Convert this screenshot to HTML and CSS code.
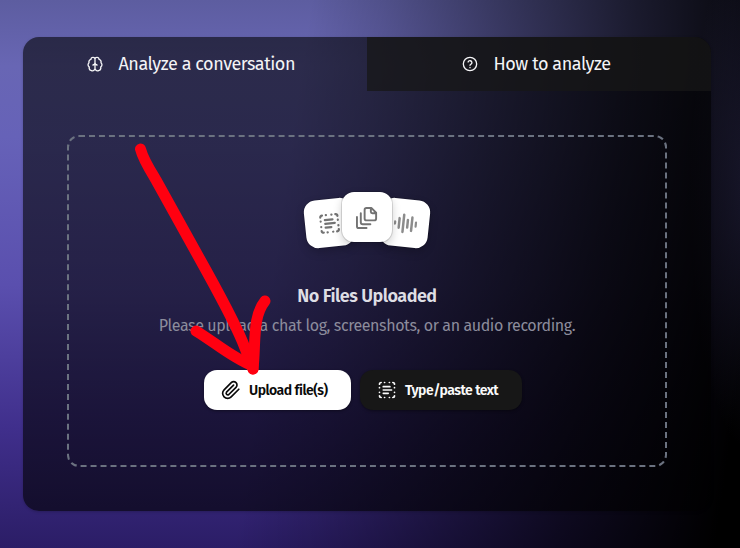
FILE: index.html
```html
<!DOCTYPE html>
<html lang="en">
<head>
<meta charset="utf-8">
<title>Analyze a conversation</title>
<link rel="stylesheet" href="styles.css">
</head>
<body>
<svg class="sprite" aria-hidden="true">
  <symbol id="select" viewBox="0 0 24 24">
    <path d="M5 3a2 2 0 0 0-2 2M19 3a2 2 0 0 1 2 2M5 21a2 2 0 0 1-2-2M21 19a2 2 0 0 1-2 2M9 3h.2M14.8 3h.2M9 21h.2M14.8 21h.2M3 9v.2M3 14.8v.2M21 9v.2M21 14.8v.2M7.5 8h8M7.5 12h10M7.5 16h6"/>
  </symbol>
</svg>
<main class="card">
  <nav class="tabs">
    <a class="tab">
      <svg class="tab-icon" viewBox="0 0 24 24"><path d="M12 5a3 3 0 0 0-6 0 4 4 0 0 0-3 5 4 4 0 0 0 .5 6.5A4 4 0 0 0 12 19zM12 5a3 3 0 0 1 6 0 4 4 0 0 1 3 5 4 4 0 0 1-.5 6.5A4 4 0 0 1 12 19zM9 13.5a4 4 0 0 0 3-4 4 4 0 0 0 3 4"/></svg>
      <span class="label-analyze">Analyze a conversation</span>
    </a>
    <a class="tab tab-muted">
      <svg class="tab-icon" viewBox="0 0 24 24"><circle cx="12" cy="12" r="10"/><path d="M9.1 9a3 3 0 0 1 5.8 1c0 2-2.9 2.4-2.9 4M12 17.3v.2"/></svg>
      <span class="label-how">How to analyze</span>
    </a>
  </nav>
  <section class="dropzone">
    <div class="tiles">
      <div class="tile tile-left"><svg viewBox="0 0 24 24"><use href="#select"/></svg></div>
      <div class="tile tile-main"><svg viewBox="0 0 24 24"><path d="M16 2h-5a2 2 0 0 0-2 2v9a2 2 0 0 0 2 2h8a2 2 0 0 0 2-2V7zM15.5 2v4a1.5 1.5 0 0 0 1.5 1.5h4M5 7.5V17a2 2 0 0 0 2 2h8M1 11.500V21a2 2 0 0 0 2 2h8"/></svg></div>
      <div class="tile tile-right"><svg viewBox="0 0 24 24"><path d="M1 11v2M5.400 7v10M9.800 3v18M14.200 8v8M18.600 5v14M23 10v4"/></svg></div>
    </div>
    <h2>No Files Uploaded</h2>
    <p>Please upload a chat log, screenshots, or an audio recording.</p>
    <div class="actions">
      <button class="btn btn-light"><svg viewBox="0 0 24 24"><path d="m21.400 11.100-9.200 9.200a6 6 0 0 1-8.500-8.500l8.600-8.600a4 4 0 1 1 5.700 5.700l-8.600 8.500a2 2 0 0 1-2.800-2.800l8.500-8.500"/></svg><span>Upload file(s)</span></button>
      <button class="btn btn-dark"><svg viewBox="0 0 24 24"><use href="#select"/></svg><span>Type/paste text</span></button>
    </div>
  </section>
</main>
<svg class="arrow" viewBox="0 0 740 548" aria-hidden="true">
  <path d="M140.500 149C143 159 150 170 156 180L207 272C223 301 238 329 245 348Q249 359 253 369"/>
  <path d="M196 331C213 341 232 358 253 366"/>
  <path d="M265 301C252 317 256 343 253 369"/>
</svg>
</body>
</html>
```
FILE: styles.css
```css
* { box-sizing: border-box; }

body {
  margin: 0;
  width: 740px;
  height: 548px;
  padding: 37px 29px 37px 23px;
  overflow: hidden;
  font-family: "Fira Sans", "Noto Sans", sans-serif;
  color: #f4f4f6;
  background:
    radial-gradient(ellipse 60px 260px at 750px 190px, rgba(70, 66, 125, .3), transparent),
    linear-gradient(98deg, transparent 38%, rgba(0, 0, 0, .14) 47%, rgba(0, 0, 0, .45) 63%, rgba(0, 0, 0, .72) 78%, #000 97%),
    linear-gradient(#5d5da0 0%, #6866b4 12%, #6662b8 25%, #5a4fae 52%, #402f8c 78%, #2b1d66 100%);
}

svg { fill: none; stroke: currentColor; stroke-width: 2; stroke-linecap: round; stroke-linejoin: round; flex: none; }
.sprite { position: absolute; width: 0; height: 0; }

.card {
  height: 474px;
  border-radius: 16px;
  overflow: hidden;
  background: linear-gradient(rgba(0, 0, 0, .58), rgba(0, 0, 0, .6));
  box-shadow: 0 1px 3px rgba(0, 0, 0, .2);
}

.tabs { display: grid; grid-template-columns: 1fr 1fr; height: 54px; }
.tab { display: flex; align-items: center; justify-content: center; gap: 16px; font-size: 18px; }
.tab-muted { background: rgba(23, 23, 23, .75); }
.tab-icon { width: 16px; height: 16px; }
.tab span { white-space: nowrap; }
.label-analyze { width: 185px; letter-spacing: -.45px; }
.label-how { width: 123px; letter-spacing: -.45px; }

.dropzone {
  margin: 44px;
  height: 332px;
  border: 2px dashed #6b7280;
  border-radius: 12px;
  padding-top: 55px;
  display: flex;
  flex-direction: column;
  align-items: center;
}

.tiles { display: flex; height: 58px; }
.tile {
  display: flex;
  align-items: center;
  justify-content: center;
  width: 48px;
  height: 48px;
  border-radius: 12px;
  background: #fff;
  color: #737373;
  box-shadow: 0 0 0 1px rgba(0, 0, 0, .12), 0 4px 10px rgba(0, 0, 0, .2);
}
.tile svg { width: 23px; height: 23px; }
.tile-left { margin: 7px -11px 0 0; transform: rotate(-6deg); }
.tile-main { z-index: 1; width: 50px; height: 50px; }
.tile-right { margin: 7px 0 0 -11px; transform: rotate(6deg); }
.tile-left svg { stroke-width: 2.3; }
.tile-right svg { stroke: #8c8c8c; stroke-width: 2.6; }

h2 { margin: 32px 0 0; font-size: 18px; line-height: 28px; font-weight: 600; letter-spacing: -.5px; color: #dedee4; white-space: nowrap; }
p { margin: 4px 0 0; font-size: 16px; line-height: 24px; letter-spacing: -.4px; color: #8c8c9c; white-space: nowrap; }

.actions { display: flex; gap: 9px; margin-top: 32px; padding-right: 8px; }
.btn {
  display: flex;
  align-items: center;
  gap: 8px;
  height: 40px;
  padding: 0 0 0 17px;
  border: 0;
  border-radius: 13px;
  font: 600 14px "Fira Sans", "Noto Sans", sans-serif;
  letter-spacing: -.5px;
  white-space: nowrap;
  box-shadow: 0 1px 3px rgba(0, 0, 0, .4);
}
.btn svg { width: 20px; height: 20px; }
.btn-light { width: 147px; background: #fff; color: #0a0a0a; }
.btn-dark { width: 162px; background: #171717; color: #fafafa; }

.arrow { position: absolute; left: 0; top: 0; width: 740px; height: 548px; stroke: #ff0010; stroke-width: 11; pointer-events: none; }
```
